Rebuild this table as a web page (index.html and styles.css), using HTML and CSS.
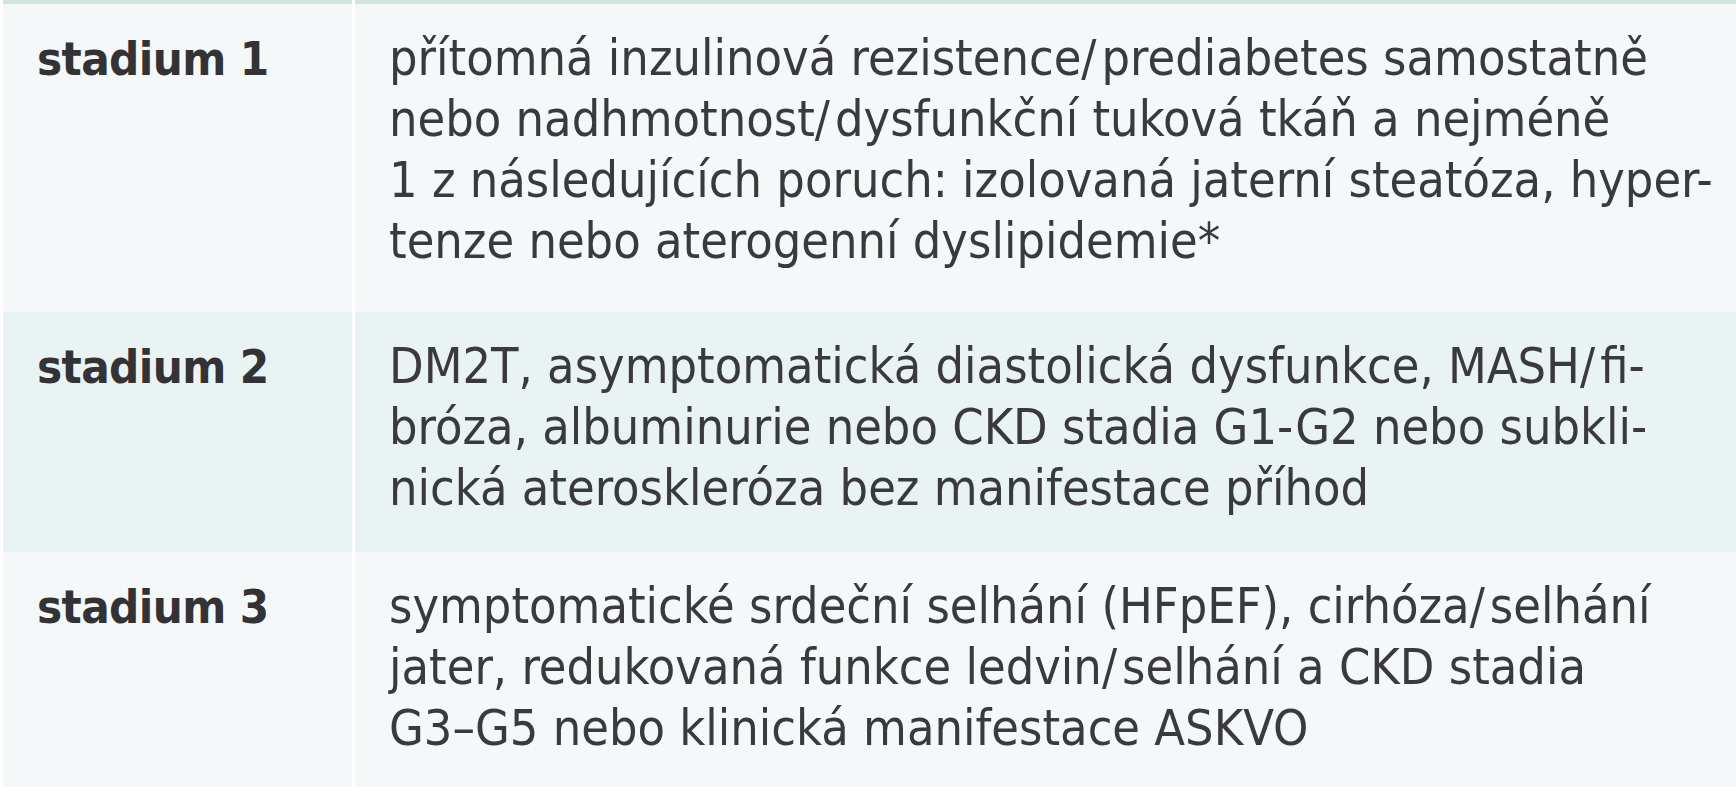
FILE: index.html
```html
<!DOCTYPE html>
<html lang="cs">
<head>
<meta charset="utf-8">
<title>Stadia</title>
<link rel="stylesheet" href="styles.css">
</head>
<body>
<div class="table">
  <div class="row row--head">
    <div class="cell"></div>
    <div class="cell"></div>
  </div>
  <div class="row row--one">
    <div class="cell label">stadium 1</div>
    <div class="cell text">přítomná inzulinová rezistence<span class="sl">/</span>prediabetes samostatně<br>nebo nadhmotnost<span class="sl">/</span>dysfunkční tuková tkáň a nejméně<br>1 z následujících poruch: izolovaná jaterní steatóza, hyper-<br>tenze nebo aterogenní dyslipidemie*</div>
  </div>
  <div class="row row--two">
    <div class="cell label">stadium 2</div>
    <div class="cell text">DM2T, asymptomatická diastolická dysfunkce, MASH<span class="sl">/</span>fi-<br>bróza, albuminurie nebo CKD stadia G1-G2 nebo subkli-<br>nická ateroskleróza bez manifestace příhod</div>
  </div>
  <div class="row row--three">
    <div class="cell label">stadium 3</div>
    <div class="cell text">symptomatické srdeční selhání (HFpEF), cirhóza<span class="sl">/</span>selhání<br>jater, redukovaná funkce ledvin<span class="sl">/</span>selhání a CKD stadia<br>G3–G5 nebo klinická manifestace ASKVO</div>
  </div>
</div>
</body>
</html>
```

FILE: styles.css
```css
html, body {
  margin: 0;
  padding: 0;
  background: #ffffff;
}

.table {
  padding-left: 3px;
  color: #3a3a3c;
}

.row {
  display: grid;
  grid-template-columns: 349px 1fr;
  column-gap: 3px;
}

.row--head .cell {
  height: 4px;
  background: #d3e4df;
}

.row--one .cell,
.row--three .cell {
  background: #f4f8f8;
}

.row--two .cell {
  background: #eaf3f3;
}

.cell.label,
.cell.text {
  padding: 24px 33px 0 34px;
  line-height: 61px;
  white-space: nowrap;
}

.label {
  font-family: "DejaVu Sans Condensed", "DejaVu Sans", sans-serif;
  font-stretch: condensed;
  font-weight: bold;
  font-size: 47px;
  letter-spacing: -0.6px;
  color: #333336;
}

.text {
  font-family: "DejaVu Sans Condensed", "DejaVu Sans", sans-serif;
  font-stretch: condensed;
  font-size: 50px;
}

.sl {
  margin-right: 5px;
}

.row--one .cell { padding-bottom: 40px; }
.row--two .cell { padding-bottom: 33px; }
.row--three .cell { padding-bottom: 28px; }
```
